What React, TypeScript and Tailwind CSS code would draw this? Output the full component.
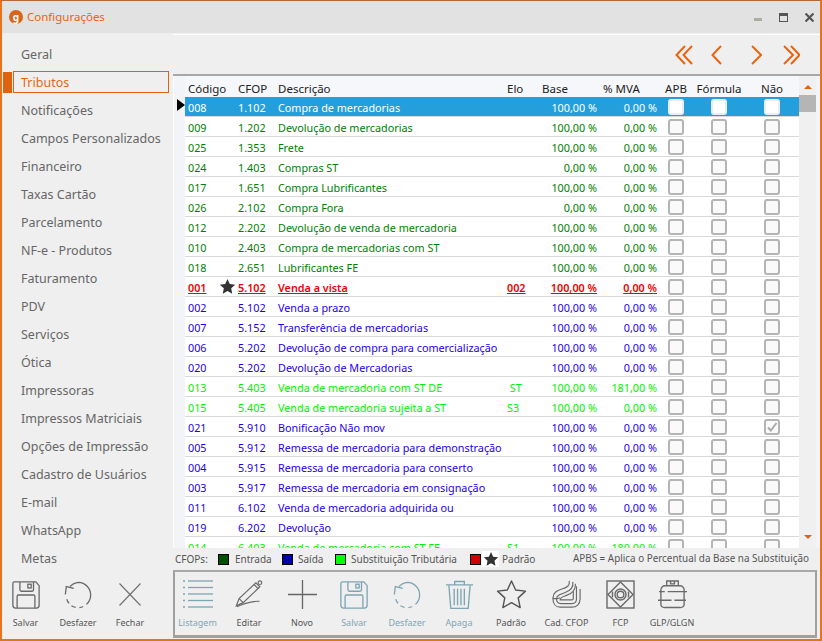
import React from "react";

const F = "[font-family:'Noto_Sans',sans-serif]";
const ORANGE = "#e8650f";

type Row = { c: string; f: string; d: string; e?: string; b: string; m: string; k: "g" | "b" | "l" | "r"; star?: boolean; sel?: boolean; chk?: boolean };
const rows: Row[] = [
  { c: "008", f: "1.102", d: "Compra de mercadorias", b: "100,00 %", m: "0,00 %", k: "g", sel: true },
  { c: "009", f: "1.202", d: "Devolução de mercadorias", b: "100,00 %", m: "0,00 %", k: "g" },
  { c: "025", f: "1.353", d: "Frete", b: "100,00 %", m: "0,00 %", k: "g" },
  { c: "024", f: "1.403", d: "Compras ST", b: "0,00 %", m: "0,00 %", k: "g" },
  { c: "017", f: "1.651", d: "Compra Lubrificantes", b: "100,00 %", m: "0,00 %", k: "g" },
  { c: "026", f: "2.102", d: "Compra Fora", b: "0,00 %", m: "0,00 %", k: "g" },
  { c: "012", f: "2.202", d: "Devolução de venda de mercadoria", b: "100,00 %", m: "0,00 %", k: "g" },
  { c: "010", f: "2.403", d: "Compra de mercadorias com ST", b: "100,00 %", m: "0,00 %", k: "g" },
  { c: "018", f: "2.651", d: "Lubrificantes FE", b: "100,00 %", m: "0,00 %", k: "g" },
  { c: "001", f: "5.102", d: "Venda a vista", e: "002", b: "100,00 %", m: "0,00 %", k: "r", star: true },
  { c: "002", f: "5.102", d: "Venda a prazo", b: "100,00 %", m: "0,00 %", k: "b" },
  { c: "007", f: "5.152", d: "Transferência de mercadorias", b: "100,00 %", m: "0,00 %", k: "b" },
  { c: "006", f: "5.202", d: "Devolução de compra para comercialização", b: "100,00 %", m: "0,00 %", k: "b" },
  { c: "020", f: "5.202", d: "Devolução de Mercadorias", b: "100,00 %", m: "0,00 %", k: "b" },
  { c: "013", f: "5.403", d: "Venda de mercadoria com ST DE", e: "\u00a0ST", b: "100,00 %", m: "181,00 %", k: "l" },
  { c: "015", f: "5.405", d: "Venda de mercadoria sujeita a ST", e: "S3", b: "100,00 %", m: "0,00 %", k: "l" },
  { c: "021", f: "5.910", d: "Bonificação Não mov", b: "100,00 %", m: "0,00 %", k: "b", chk: true },
  { c: "005", f: "5.912", d: "Remessa de mercadoria para demonstração", b: "100,00 %", m: "0,00 %", k: "b" },
  { c: "004", f: "5.915", d: "Remessa de mercadoria para conserto", b: "100,00 %", m: "0,00 %", k: "b" },
  { c: "003", f: "5.917", d: "Remessa de mercadoria em consignação", b: "100,00 %", m: "0,00 %", k: "b" },
  { c: "011", f: "6.102", d: "Venda de mercadoria adquirida ou", b: "100,00 %", m: "0,00 %", k: "b" },
  { c: "019", f: "6.202", d: "Devolução", b: "100,00 %", m: "0,00 %", k: "b" },
  { c: "014", f: "6.403", d: "Venda de mercadoria com ST FE", e: "S1", b: "100,00 %", m: "180,00 %", k: "l" },
];

const menu = ["Geral", "Tributos", "Notificações", "Campos Personalizados", "Financeiro", "Taxas Cartão", "Parcelamento", "NF-e - Produtos", "Faturamento", "PDV", "Serviços", "Ótica", "Impressoras", "Impressos Matriciais", "Opções de Impressão", "Cadastro de Usuários", "E-mail", "WhatsApp", "Metas"];

const COLS = "grid grid-cols-[33px_19px_40px_229px_35px_59px_60px_32px_54px_52px]";

const kindClass: Record<Row["k"], string> = {
  g: "text-[#008000]",
  b: "text-[#1c00f0]",
  l: "text-[#00f000]",
  r: "text-[#f00000] font-semibold underline",
};

function Star({ size, fill, stroke }: { size: number; fill?: string; stroke?: string }) {
  return (
    <svg width={size} height={size} viewBox="0 0 24 24">
      <path d="M12 1.500l3.200 7 7.600.9-5.600 5.200 1.500 7.500L12 18.300l-6.700 3.800 1.500-7.500L1.200 9.400l7.600-.9z" fill={fill ?? "none"} stroke={stroke ?? "none"} strokeWidth={stroke ? 1.100 : 0} strokeLinejoin="round" />
    </svg>
  );
}

function Check({ on, sel }: { on?: boolean; sel?: boolean }) {
  return (
    <div className={`mx-auto flex h-4 w-4 items-center justify-center rounded-[3px] border-2 ${sel ? "border-[#e8eef2] bg-white" : "border-[#b4b4b4] bg-[#fafafa]"}`}>
      {on && (
        <svg width="12" height="12" viewBox="0 0 12 12">
          <path d="M2 6.500l2.800 3L10.500 2" fill="none" stroke="#a8a8a8" strokeWidth="2" />
        </svg>
      )}
    </div>
  );
}

function GridRow({ r }: { r: Row }) {
  const col = r.sel ? "text-white" : kindClass[r.k];
  return (
    <div className={`${COLS} h-5 shrink-0 items-center border-b border-[#d9d9d9] text-[10.800px] leading-none ${r.sel ? "bg-[#249fdc]" : "bg-white"} ${col}`}>
      <div className="pt-[4px] pl-[3px]">{r.c}</div>
      <div className="flex justify-center">{r.star && <Star size={17} fill="#333333" />}</div>
      <div className="pt-[4px] pl-[1px]">{r.f}</div>
      <div className="whitespace-nowrap pt-[4px] pl-[1px]">{r.d}</div>
      <div className="pt-[4px] pl-[1px] whitespace-pre">{r.e}</div>
      <div className="pt-[4px] pr-[3px] text-right">{r.b}</div>
      <div className="pt-[4px] pr-[3px] text-right">{r.m}</div>
      <Check sel={r.sel} />
      <Check sel={r.sel} />
      <Check sel={r.sel} on={r.chk} />
    </div>
  );
}

function SaveIcon({ c }: { c: string }) {
  return (
    <svg width="30" height="30" viewBox="0 0 32 32" fill="none" stroke={c} strokeWidth="1.400">
      <path d="M3.500 2h23l3.500 4v21c0 1.600-1 3-2.800 3H4.800C3 30 2 28.600 2 27V3.500C2 2.600 2.600 2 3.500 2z" />
      <path d="M9.500 2v8.500c0 1 .6 1.500 1.500 1.500h11.500c1 0 1.500-.5 1.500-1.500V2" />
      <rect x="18" y="4.500" width="3.500" height="4" />
      <path d="M6.500 30V17.500c0-1 .6-1.500 1.500-1.500h16c1 0 1.500.5 1.500 1.500V30" />
    </svg>
  );
}
function UndoIcon({ c }: { c: string }) {
  return (
    <svg width="30" height="30" viewBox="0 0 32 32" fill="none" stroke={c} strokeWidth="1.400">
      <path d="M7.500 7A14 14 0 0 1 16.500 2.500a13.500 13.500 0 0 1 13 13.500 13.500 13.500 0 0 1-4.500 10" />
      <path d="M21.500 28.300a13.500 13.500 0 0 1-4 1.200" />
      <path d="M13.500 29.300a13.500 13.500 0 0 1-4.500-1.800" />
      <path d="M6.500 25a13.500 13.500 0 0 1-2.500-4.500" />
      <path d="M2.500 15.500l1-8.500 8 2" />
    </svg>
  );
}
function CloseIcon() {
  return (
    <svg width="22" height="23" viewBox="0 0 22 23" fill="none" stroke="#6f6f6f" strokeWidth="1.100">
      <path d="M.5.500l21 22M21.500.500l-21 22" />
    </svg>
  );
}
function ListIcon() {
  const c = "#7fa5b3";
  return (
    <svg width="30" height="29" viewBox="0 0 30 29" fill="none" stroke={c} strokeWidth="1.300">
      {[1, 7.500, 14, 20.500, 27].map((y) => (
        <g key={y}>
          <path d={`M5 ${y}H30`} />
          <path d={`M0 ${y}H2`} />
        </g>
      ))}
    </svg>
  );
}
function PencilIcon() {
  return (
    <svg width="29" height="29" viewBox="0 0 32 32" fill="none" stroke="#6a6a6a" strokeWidth="1.300">
      <path d="M1.500 28.500l3-8L23 3l4.500 4.500L9 25z" />
      <path d="M4.500 20.500L9 25M21 5l4.500 4.500" />
      <circle cx="27.500" cy="3" r="2" />
      <path d="M2 29.500c6-2.500 14-6.500 25-6" />
    </svg>
  );
}
function PlusIcon() {
  return (
    <svg width="29" height="29" viewBox="0 0 29 29" fill="none" stroke="#666666" strokeWidth="1.300">
      <path d="M14.500 0v29M0 14.500h29" />
    </svg>
  );
}
function TrashIcon() {
  const c = "#7fa5b3";
  return (
    <svg width="29" height="29" viewBox="0 0 30 30" fill="none" stroke={c} strokeWidth="1.400">
      <path d="M1 5h28M10 4.500V1.500h10V4.500" />
      <path d="M4 5.500l2 24h18l2-24" />
      <path d="M9.500 9v17M13 9v17M16.500 9v17M20 9v17" />
    </svg>
  );
}
function WavesIcon() {
  return (
    <svg width="29" height="29" viewBox="0 0 32 32" fill="none" stroke="#6a6a6a" strokeWidth="1.300">
      <path d="M19 1c1 5-2 7-8 9-6 2-10 4-10 10 0 6 3 10 8 10h13c5 0 9-3 9-9V10" />
      <path d="M23 2c1 7-3 10-9 12-6 2-9 3-9 7 0 3 2 5 5 5h12c3 0 5-2 5-5V7" />
      <path d="M26 4c0 8-4 11-10 13-4 1.500-7 2-7 5h13c1 0 1.500-1 1.500-2V12" />
      <path d="M1 20c3 1 5 1 8-.5" />
    </svg>
  );
}
function FcpIcon() {
  return (
    <svg width="29" height="29" viewBox="0 0 29 29" fill="none" stroke="#6a6a6a" strokeWidth="1.400">
      <rect x="1" y="1" width="27" height="27" />
      <path d="M14.500 2L27 14.500 14.500 27 2 14.500z" />
      <circle cx="14.500" cy="14.500" r="5.500" />
      <circle cx="14.500" cy="14.500" r="3.300" />
      <path d="M6.500 11.500v6M22.500 11.500v6" />
    </svg>
  );
}
function GasIcon() {
  return (
    <svg width="29" height="29" viewBox="0 0 30 30" fill="none" stroke="#6a6a6a" strokeWidth="1.400">
      <path d="M9 6V1h12v5" />
      <path d="M13 1v3h4V1" />
      <path d="M7 28.500h16c2-.3 4-1.500 4-3V10c0-2-2-4-4-4H7c-2 0-4 2-4 4v15.500c0 1.500 2 2.700 4 3z" />
      <path d="M1 12h6M10 12h20M0 21h14M17 21h12" />
    </svg>
  );
}

function ToolBtn({ w, label, muted, icon }: { w: string; label: string; muted?: boolean; icon: React.ReactNode }) {
  return (
    <div className={`${w} flex shrink-0 flex-col items-center`}>
      <div className="flex h-[33px] items-center justify-center">{icon}</div>
      <div className={`mt-[5px] text-[9px] leading-[13px] whitespace-nowrap ${muted ? "text-[#7fa5b3]" : "text-[#555555]"}`}>{label}</div>
    </div>
  );
}

function NavChevron({ dir, dbl }: { dir: "l" | "r"; dbl?: boolean }) {
  const pts = dir === "l" ? ["M10 1L1.500 10 10 19", "M17 1L8.500 10 17 19"] : ["M2 1l9 9-9 9", "M9 1l8.500 9L9 19"];
  return (
    <svg width={dbl ? 18 : 12} height="20" viewBox={dbl ? "0 0 18 20" : "0 0 12 20"} fill="none" stroke={ORANGE} strokeWidth="2">
      <path d={pts[0]} />
      {dbl && <path d={pts[1]} />}
    </svg>
  );
}

function Swatch({ c }: { c: string }) {
  return <div className="h-[11px] w-[11px] shrink-0 border border-black" style={{ backgroundColor: c }} />;
}

export default function App() {
  return (
    <div className={`${F} flex h-[641px] w-[822px] flex-col overflow-hidden border-x-2 border-b-[2px] border-t border-x-[#e8731a] border-b-[#e8731a] border-t-[#b5683a] bg-[#efefef]`}>
      {/* title bar */}
      <div className="flex h-[32px] shrink-0 items-center bg-[#e2e2e2] pl-[7px] pr-[6px]">
        <div className="flex h-[14px] w-[14px] items-center justify-center rounded-full bg-[#d9641a] text-[10px] leading-none font-bold text-white">g</div>
        <div className="ml-[4px] text-[11.500px] leading-none text-[#e8650f]">Configurações</div>
        <div className="ml-auto flex items-center gap-[17px] pt-[1px]">
          <div className="mt-[3px] h-[3px] w-[8px] bg-[#adada0]" />
          <div className="h-[9px] w-[9px] border border-t-[3px] border-[#555555]" />
          <svg width="9" height="9" viewBox="0 0 9 9" stroke="#555555" strokeWidth="2.200"><path d="M.5.500l8 8M8.500.500l-8 8" /></svg>
        </div>
      </div>

      <div className="flex min-h-0 flex-1">
        {/* sidebar */}
        <div className="flex w-[171px] shrink-0 flex-col">
          <div className="flex flex-col pt-[7px]">
            {menu.map((m) =>
              m === "Tributos" ? (
                <div key={m} className="flex h-7 items-center pl-[1px]">
                  <div className="h-[21px] w-[9px] bg-[#e0620f]" />
                  <div className="ml-[1px] flex h-[22px] w-[156px] items-center border border-[#e0620f] pt-[3px] pl-[7px] text-[12.500px] text-[#e8650f]">{m}</div>
                </div>
              ) : (
                <div key={m} className="flex h-7 items-center pt-[2px] pl-[19px] text-[12.500px] text-[#666666]">{m}</div>
              )
            )}
          </div>
          <div className="mt-[6px] flex">
            <ToolBtn w="w-[47px]" label="Salvar" icon={<SaveIcon c="#6a6a6a" />} />
            <ToolBtn w="w-[58px]" label="Desfazer" icon={<UndoIcon c="#6a6a6a" />} />
            <ToolBtn w="w-[46px]" label="Fechar" icon={<CloseIcon />} />
          </div>
        </div>

        {/* main */}
        <div className="flex min-w-0 flex-1 flex-col pt-[1px]">
          <div className="flex h-[42px] shrink-0 items-center justify-end border-t border-b-2 border-t-white border-b-[#a8a8a8] bg-[#efefef] pr-[20px]">
            <NavChevron dir="l" dbl />
            <div className="w-[18px]" />
            <NavChevron dir="l" />
            <div className="w-[27px]" />
            <NavChevron dir="r" />
            <div className="w-[20px]" />
            <NavChevron dir="r" dbl />
          </div>

          <div className="flex h-[472px] shrink-0 overflow-hidden border-l border-white bg-[#f2f4f7]">
            <div className="flex w-[11px] shrink-0 flex-col pt-[23px]">
              <svg width="8" height="12" viewBox="0 0 8 12" className="ml-[3px]"><path d="M0 0l8 6-8 6z" fill="#000000" /></svg>
            </div>
            <div className="flex w-[614px] shrink-0 flex-col">
              <div className={`${COLS} h-[21px] shrink-0 items-center bg-[#f5f7fa] pt-[5px] text-[11.500px] leading-none text-[#222222]`}>
                <div className="col-span-2 pl-[3px]">Código</div>
                <div className="pl-[1px]">CFOP</div>
                <div className="pl-[1px]">Descrição</div>
                <div className="pl-[1px]">Elo</div>
                <div className="pl-[1px]">Base</div>
                <div className="pl-[3px]">% MVA</div>
                <div className="text-center">APB</div>
                <div className="text-center">Fórmula</div>
                <div className="text-center">Não</div>
              </div>
              {rows.map((r) => (
                <GridRow key={r.c} r={r} />
              ))}
            </div>
            <div className="flex w-[17px] shrink-0 flex-col bg-[#f0f0f0]">
              <div className="flex h-[19px] shrink-0 items-center justify-center pt-[2px]">
                <div className="h-0 w-0 border-x-[4px] border-b-[4px] border-x-transparent border-b-[#d9641a]" />
              </div>
              <div className="h-[17px] w-[17px] shrink-0 bg-[#b5b5b5]" />
              <div className="flex-1" />
              <div className="flex h-[16px] shrink-0 items-start justify-center pt-[3px]">
                <div className="h-0 w-0 border-x-[4px] border-t-[4px] border-x-transparent border-t-[#d9641a]" />
              </div>
            </div>
          </div>

          {/* legend */}
          <div className="flex h-[22px] shrink-0 items-center pl-[2px] pr-[11px] text-[10px] leading-none text-[#555555]">
            <span className="w-[43px]">CFOPs:</span>
            <Swatch c="#005000" />
            <span className="ml-[6px] w-[47px]">Entrada</span>
            <Swatch c="#0000b0" />
            <span className="ml-[5px] w-[37px]">Saída</span>
            <Swatch c="#00ff00" />
            <span className="ml-[5px] w-[119px]">Substituição Tributária</span>
            <Swatch c="#d00000" />
            <span className="ml-[1px] flex h-4 w-[17px] items-center justify-center bg-white"><Star size={16} fill="#333333" /></span>
            <span className="ml-[3px]">Padrão</span>
            <span className="ml-auto text-[9.900px]">APBS = Aplica o Percentual da Base na Substituição</span>
          </div>

          {/* toolbar */}
          <div className="mr-[3px] flex h-[68px] shrink-0 border-x-2 border-t-2 border-b-[3px] border-[#a0a0a0] border-t-[#a8a8a8] bg-[#efefef] pt-[6px]">
            <ToolBtn w="w-[45px]" label="Listagem" muted icon={<ListIcon />} />
            <ToolBtn w="w-[58px]" label="Editar" icon={<PencilIcon />} />
            <ToolBtn w="w-[48px]" label="Novo" icon={<PlusIcon />} />
            <ToolBtn w="w-[56px]" label="Salvar" muted icon={<SaveIcon c="#7fa5b3" />} />
            <ToolBtn w="w-[50px]" label="Desfazer" muted icon={<UndoIcon c="#7fa5b3" />} />
            <ToolBtn w="w-[54px]" label="Apaga" muted icon={<TrashIcon />} />
            <ToolBtn w="w-[50px]" label="Padrão" icon={<Star size={31} stroke="#555555" />} />
            <ToolBtn w="w-[61px]" label="Cad. CFOP" icon={<WavesIcon />} />
            <ToolBtn w="w-[47px]" label="FCP" icon={<FcpIcon />} />
            <ToolBtn w="w-[56px]" label="GLP/GLGN" icon={<GasIcon />} />
          </div>
        </div>
      </div>
    </div>
  );
}
